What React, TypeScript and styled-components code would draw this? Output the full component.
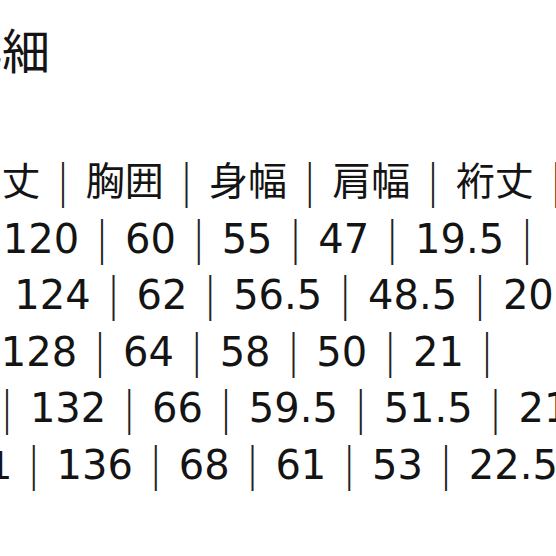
import React from "react";
import styled, { createGlobalStyle } from "styled-components";

const GlobalStyle = createGlobalStyle`
  html, body { margin: 0; padding: 0; background: #fff; }
`;

const Page = styled.div`
  width: 556px;
  height: 556px;
  overflow: hidden;
  background: #fff;
  color: #141414;
`;

const Title = styled.div`
  height: 96px;
  line-height: 96px;
  margin-left: -46px;
  white-space: nowrap;
  font-family: "Noto Sans CJK JP", sans-serif;
  font-size: 48px;
`;

const Table = styled.div`
  margin-top: 58px;
  display: flex;
  flex-direction: column;
`;

const Row = styled.div<{ $shift: number; $size: number }>`
  display: flex;
  align-items: center;
  height: 56.6px;
  line-height: 56.6px;
  white-space: nowrap;
  margin-left: ${({ $shift }) => $shift}px;
  font-family: "DejaVu Sans", "Noto Sans CJK JP", sans-serif;
  font-size: ${({ $size }) => $size}px;
`;

const Cell = styled.span`
  flex: none;
`;

// the cut-off glyph at the very left of a row
const Cut = styled.span`
  flex: none;
  font-family: "Liberation Sans", sans-serif;
`;

const Sep = styled.span<{ $w: number }>`
  flex: none;
  display: flex;
  justify-content: center;
  width: ${({ $w }) => $w}px;
  line-height: 40px;
  font-family: "Noto Sans CJK JP", sans-serif;
  font-size: 46px;
  color: #222;
`;

interface RowData {
  shift: number;
  size: number;
  sep: number;
  cut?: string;
  cells: string[];
}

const rows: RowData[] = [
  { shift: -37.6, size: 39, sep: 45.3, cells: ["着丈", "胸囲", "身幅", "肩幅", "裄丈", "袖丈"] },
  { shift: 2.8, size: 40, sep: 45.8, cells: ["120", "60", "55", "47", "19.5", ""] },
  { shift: 14.3, size: 40, sep: 45.8, cells: ["124", "62", "56.5", "48.5", "20.5"] },
  { shift: 0.8, size: 40, sep: 45.8, cells: ["128", "64", "58", "50", "21", ""] },
  { shift: -15.9, size: 40, sep: 45.8, cells: ["", "132", "66", "59.5", "51.5", "21.5"] },
  { shift: -11.5, size: 40, sep: 45.8, cut: "1", cells: ["", "136", "68", "61", "53", "22.5"] },
];

const SizeRow = ({ row }: { row: RowData }) => {
  const out: React.ReactNode[] = [];
  row.cells.forEach((c, i) => {
    if (i > 0) out.push(<Sep key={`s${i}`} $w={row.sep}>｜</Sep>);
    if (c) out.push(<Cell key={`c${i}`}>{c}</Cell>);
  });
  return (
    <Row $shift={row.shift} $size={row.size}>
      {row.cut ? <Cut>{row.cut}</Cut> : null}
      {out}
    </Row>
  );
};

export default function App() {
  return (
    <Page>
      <GlobalStyle />
      <Title>詳細</Title>
      <Table>
        {rows.map((r, i) => (
          <SizeRow key={`row-${i}`} row={r} />
        ))}
      </Table>
    </Page>
  );
}
